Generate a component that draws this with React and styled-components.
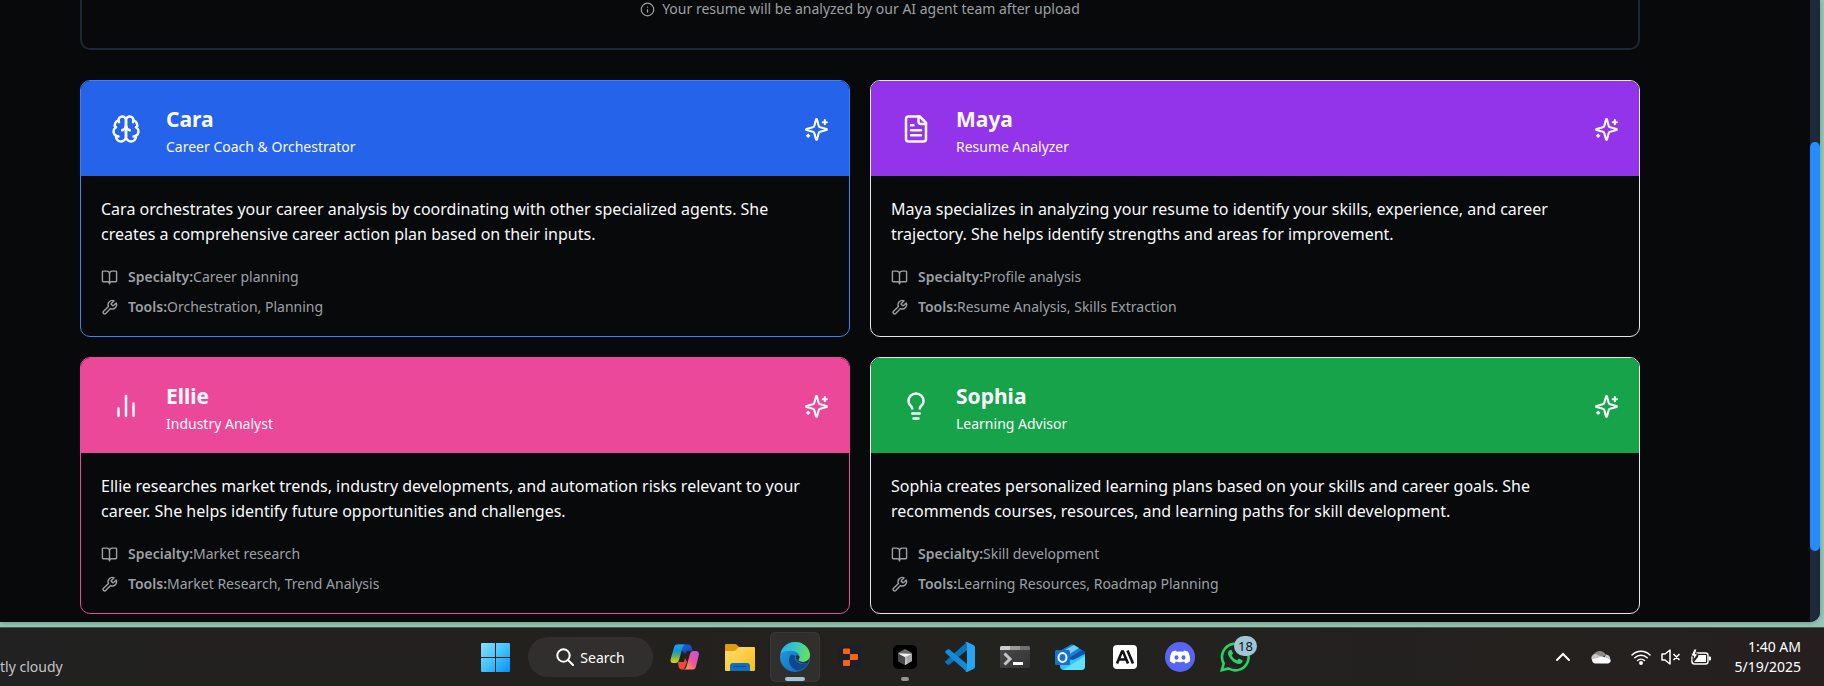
import React from 'react';
import styled, { createGlobalStyle } from 'styled-components';

const Global = createGlobalStyle`
  *, *::before, *::after { box-sizing: border-box; }
  html, body { margin: 0; }
  body { background: #95c8b5; font-family: "Noto Sans", "Open Sans", sans-serif; }
  h2, p, dl, dt, dd { margin: 0; }
  button { font: inherit; color: inherit; border: 0; padding: 0; background: none; cursor: pointer; }
  svg { display: block; flex: none; }
`;

const Desktop = styled.div`
  display: flex;
  flex-direction: column;
  min-height: 100vh;
  gap: 5px;
  background: #95c8b5;
`;

const Browser = styled.div`
  display: flex;
  flex: 1;
  margin-right: 4px;
  border-bottom-right-radius: 10px;
  overflow: hidden;
  background: #08090b;
  color: #f8fafc;
  box-shadow: 0 1px 5px rgba(0, 0, 0, 0.25);
`;

const Page = styled.main`
  flex: 1;
  padding: 0 170px 8px 80px;
`;

const ScrollTrack = styled.div`
  display: grid;
  grid-template-rows: 142fr 409fr 71fr;
  width: 10px;
  background: #1e293b;
`;

const ScrollThumb = styled.div`
  grid-row: 2;
  border-radius: 5px;
  background: #248cfc;
`;

const UploadPanel = styled.section`
  display: flex;
  justify-content: center;
  padding-bottom: 30px;
  margin-bottom: 30px;
  border: 2px solid #1e2735;
  border-top: 0;
  border-radius: 0 0 10px 10px;
`;

const Hint = styled.p`
  display: flex;
  align-items: center;
  gap: 7px;
  font-size: 14px;
  line-height: 18px;
  color: #9ca0a5;
`;

const Cards = styled.div`
  display: grid;
  grid-template-columns: 1fr 1fr;
  gap: 20px;
`;

const Card = styled.article`
  border: 1px solid ${(p) => p.$border};
  border-radius: 10px;
  overflow: hidden;
`;

const CardHeader = styled.header`
  display: flex;
  align-items: center;
  gap: 15px;
  padding: 20px 20px 19px;
  background: ${(p) => p.$fill};
`;

const Avatar = styled.div`
  padding: 10px;
`;

const Titles = styled.div`
  flex: 1;
  padding-top: 1px;
`;

const Name = styled.h2`
  font-size: 21px;
  line-height: 35px;
  font-weight: 700;
`;

const Role = styled.p`
  font-size: 14px;
  line-height: 20px;
`;

const CardBody = styled.div`
  display: flex;
  flex-direction: column;
  gap: 20px;
  padding: 21px 20px 19px;
`;

const Description = styled.p`
  padding-right: 20px;
  font-size: 16px;
  line-height: 25px;
`;

const Facts = styled.dl`
  display: flex;
  flex-direction: column;
  gap: 10px;
`;

const Fact = styled.div`
  display: flex;
  align-items: center;
  font-size: 14px;
  line-height: 20px;
  color: #9ca0a5;
  svg { margin-right: 10px; }
  dt { font-weight: 600; }
`;

const Taskbar = styled.footer`
  display: grid;
  grid-template-columns: 470px auto 1fr;
  align-items: center;
  height: 59px;
  border-top: 1px solid #4b5350;
  background: linear-gradient(90deg, #212121, #23211e 30%, #22221f 60%, #25201f);
  color: #fff;
`;

const Weather = styled.div`
  padding-top: 20px;
  font-size: 14px;
  line-height: 20px;
  color: #c4c4c4;
`;

const Apps = styled.nav`
  display: flex;
  align-items: center;
  gap: 5px;
`;

const AppButton = styled.button`
  position: relative;
  display: grid;
  place-items: center;
  width: 50px;
  height: 50px;
  border-radius: 6px;
  ${(p) => p.$active && 'background: #302f2d; box-shadow: inset 0 0 0 1px #393836;'}
`;

const Running = styled.span`
  position: absolute;
  bottom: 1px;
  width: ${(p) => (p.$active ? 20 : 8)}px;
  height: 4px;
  border-radius: 2px;
  background: ${(p) => (p.$active ? '#9fc5d8' : '#96938f')};
`;

const Badge = styled.span`
  position: absolute;
  top: 4px;
  right: 3px;
  min-width: 23px;
  border-radius: 10px;
  background: #a0c6d6;
  color: #101418;
  font-size: 13px;
  line-height: 20px;
  text-align: center;
`;

const SearchButton = styled.button`
  display: flex;
  align-items: center;
  justify-content: center;
  gap: 6px;
  width: 125px;
  height: 40px;
  margin: 0 2px 0 3px;
  border-radius: 20px;
  && { background: #302f2d; }
  font-size: 14px;
`;

const Tray = styled.div`
  display: flex;
  align-items: center;
  justify-content: flex-end;
  gap: 20px;
  padding-right: 23px;
`;

const TrayButton = styled.button`
  display: flex;
  align-items: center;
  gap: 10px;
`;

const Clock = styled.time`
  min-width: 70px;
  font-size: 14px;
  line-height: 20px;
  text-align: right;
`;

const ClockLine = styled.span`
  display: block;
`;

const Line = ({ size, children, width = 2 }) => (
  <svg width={size} height={size} viewBox="0 0 24 24" fill="none" stroke="currentColor" strokeWidth={width} strokeLinecap="round" strokeLinejoin="round" aria-hidden="true">
    {children}
  </svg>
);

const Brain = () => (
  <Line size={30}>
    <path d="M12 5a3 3 0 1 0-5.997.125 4 4 0 0 0-2.526 5.77 4 4 0 0 0 .556 6.588A4 4 0 1 0 12 18Z" />
    <path d="M12 5a3 3 0 1 1 5.997.125 4 4 0 0 1 2.526 5.77 4 4 0 0 1-.556 6.588A4 4 0 1 1 12 18Z" />
    <path d="M15 13a4.5 4.5 0 0 1-3-4 4.5 4.5 0 0 1-3 4" />
    <path d="M17.599 6.5a3 3 0 0 0 .399-1.375M6.003 5.125A3 3 0 0 0 6.401 6.5M3.477 10.896a4 4 0 0 1 .585-.396M19.938 10.5a4 4 0 0 1 .585.396M6 18a4 4 0 0 1-1.967-.516M19.967 17.484A4 4 0 0 1 18 18" />
  </Line>
);

const FileText = () => (
  <Line size={30}>
    <path d="M15 2H6a2 2 0 0 0-2 2v16a2 2 0 0 0 2 2h12a2 2 0 0 0 2-2V7Z" />
    <path d="M14 2v4a2 2 0 0 0 2 2h4M10 9H8M16 13H8M16 17H8" />
  </Line>
);

const Bars = () => (
  <Line size={30}>
    <path d="M18 20V10M12 20V4M6 20v-6" />
  </Line>
);

const Bulb = () => (
  <Line size={30}>
    <path d="M15 14c.2-1 .7-1.7 1.5-2.5 1-.9 1.5-2.2 1.5-3.5A6 6 0 0 0 6 8c0 1 .2 2.2 1.5 3.5.7.7 1.3 1.5 1.5 2.5M9 18h6M10 22h4" />
  </Line>
);

const Sparkles = () => (
  <Line size={25}>
    <path d="M9.937 15.5A2 2 0 0 0 8.5 14.063l-6.135-1.582a.5.5 0 0 1 0-.962L8.5 9.936A2 2 0 0 0 9.937 8.5l1.582-6.135a.5.5 0 0 1 .963 0L14.063 8.5A2 2 0 0 0 15.5 9.937l6.135 1.581a.5.5 0 0 1 0 .964L15.5 14.063a2 2 0 0 0-1.437 1.437l-1.582 6.135a.5.5 0 0 1-.963 0z" />
    <path d="M20 3v4M22 5h-4M4 17v2M5 18H3" />
  </Line>
);

const Book = () => (
  <Line size={17}>
    <path d="M12 7v14M3 18a1 1 0 0 1-1-1V4a1 1 0 0 1 1-1h5a4 4 0 0 1 4 4 4 4 0 0 1 4-4h5a1 1 0 0 1 1 1v13a1 1 0 0 1-1 1h-6a3 3 0 0 0-3 3 3 3 0 0 0-3-3z" />
  </Line>
);

const Wrench = () => (
  <Line size={17}>
    <path d="M14.7 6.3a1 1 0 0 0 0 1.4l1.6 1.6a1 1 0 0 0 1.4 0l3.77-3.77a6 6 0 0 1-7.94 7.94l-6.91 6.91a2.12 2.12 0 0 1-3-3l6.91-6.91a6 6 0 0 1 7.94-7.94l-3.76 3.76z" />
  </Line>
);

const Info = () => (
  <Line size={15}>
    <circle cx="12" cy="12" r="10" />
    <path d="M12 16v-4M12 8h.01" />
  </Line>
);

const AppSvg = ({ children }) => (
  <svg width="30" height="30" viewBox="0 0 30 30" aria-hidden="true">{children}</svg>
);

const Windows = () => (
  <AppSvg>
    <defs>
      <linearGradient id="win" x1="0" y1="0" x2="30" y2="30" gradientUnits="userSpaceOnUse">
        <stop stopColor="#8ce0fd" /><stop offset=".5" stopColor="#45c4fb" /><stop offset="1" stopColor="#0590f8" />
      </linearGradient>
    </defs>
    <path fill="url(#win)" d="M1 2q0-1 1-1h13v14H1zM16 1h13q1 0 1 1v13H16zM1 16h14v14H2q-1 0-1-1zM16 16h14v13q0 1-1 1H16z" />
  </AppSvg>
);

const Copilot = () => (
  <AppSvg>
    <defs>
      <linearGradient id="copA" x1="0" y1="0" x2="0" y2="1"><stop stopColor="#1aa3f0" /><stop offset=".35" stopColor="#1595d8" /><stop offset=".65" stopColor="#5cb85a" /><stop offset="1" stopColor="#f7c90c" /></linearGradient>
      <linearGradient id="copB" x1="1" y1="0" x2="0" y2="1"><stop stopColor="#b256ee" /><stop offset=".5" stopColor="#ee5497" /><stop offset="1" stopColor="#ffa65a" /></linearGradient>
      <linearGradient id="copC" x1="0" y1="0" x2="1" y2="1"><stop stopColor="#1877e8" /><stop offset="1" stopColor="#1535a8" /></linearGradient>
    </defs>
    <path fill="url(#copC)" d="M7 2.500h11c2 0 3 1 3.500 2.500l1.200 4h-4c-2 0-3 1-3.600 3z" />
    <path fill="#f0483c" d="M8 20h6l1-4 2 4-3 7.500h-2c-2 0-3-1-3.500-3z" />
    <path fill="url(#copA)" d="M7 2.500h8c-1.500.3-2 1.500-2.500 3L9 18c-.6 2-1.500 3-3.500 3H3c-2 0-3-2-2.300-4L4 5.500c.5-2 1.500-3 3-3z" />
    <path fill="url(#copB)" d="M23 27.500h-9c1.500-.3 2-1.500 2.500-3L20 12c.6-2 1.500-3 3.500-3H26c2 0 3.400 2 2.800 4L26 24.500c-.5 2-1.500 3-3 3z" />
  </AppSvg>
);

const Explorer = () => (
  <AppSvg>
    <defs><linearGradient id="fold" x1="0" y1="0" x2="1" y2="1"><stop stopColor="#ffde72" /><stop offset="1" stopColor="#fbbc14" /></linearGradient></defs>
    <path fill="#e09b08" d="M0 3q0-1 1-1h9q1 0 2 1l3 3v5H0z" />
    <path fill="url(#fold)" d="M0 10q0-1 1-1h8q1 0 2-1l3-3h15q1 0 1 1v22q0 1-1 1H1q-1 0-1-1z" />
    <path fill="#0d6fc4" d="M5 29v-5q0-3 3-3h14q3 0 3 3v5z" />
    <path stroke="#07447f" strokeLinecap="round" d="M9 24.500h12" />
  </AppSvg>
);

const Edge = () => (
  <AppSvg>
    <defs>
      <linearGradient id="edA" x1="0" y1=".3" x2="1" y2=".5"><stop stopColor="#2ab2e8" /><stop offset=".45" stopColor="#35c6c8" /><stop offset="1" stopColor="#66e258" /></linearGradient>
      <linearGradient id="edB" x1="0" y1="0" x2="1" y2="1"><stop stopColor="#249cdf" /><stop offset="1" stopColor="#0a66bd" /></linearGradient>
    </defs>
    <circle cx="15" cy="15" r="15" fill="url(#edB)" />
    <path fill="#0f488f" d="M11 12.500C7 17 9 26 17 28.500c5-.4 9-3.500 11-7.500-3 1.500-7 1.500-10-.5-3-2-4-4-2.600-7z" />
    <path fill="url(#edA)" d="M.5 12C1.500 5 8 0 15 0c9 0 15 6.500 15 13 0 4-3 7-7 7-3 0-5-1.300-4.600-2.300.4-.7 1.100-1.200 1.100-2.900 0-3-3.500-6-8.500-6C6 8.800 2 10.500.5 12z" />
    <path fill="#302f2d" d="M30 14c-.4 3.600-3.500 6-7 6-3 0-5-1.300-4.600-2.300.4-.7 1.100-1.200 1.100-2.900-.6-1-2-1.800-3-1.500-1.800 2 .2 6 4 7.500 3 1 5.500.7 7.500 0z" />
  </AppSvg>
);

const Replit = () => (
  <AppSvg>
    <rect x="4" y="4" width="22" height="22" rx="2" fill="#1b202c" />
    <path fill="#f9640a" d="M9 6.500h5q1 0 1 1V12H9q-1 0-1-1V7.500q0-1 1-1zM15 12h7q1 0 1 1v4q0 1-1 1h-7zM9 18h6v5q0 1-1 1H9q-1 0-1-1v-4q0-1 1-1z" />
  </AppSvg>
);

const Cursor = () => (
  <AppSvg>
    <defs><linearGradient id="cur" x1="0" y1="0" x2="1" y2="1"><stop stopColor="#8c8c8c" /><stop offset="1" stopColor="#e4e4e4" /></linearGradient></defs>
    <rect x="3" y="3" width="24" height="24" rx="5" fill="#000" />
    <path fill="#707070" d="M15 7l7 4v8l-7 4-7-4v-8z" />
    <path fill="#4a4a4a" d="M8 11l7 4v8l-7-4z" />
    <path fill="url(#cur)" d="M8 11l14 1-5 4v6l-2 1v-8z" />
    <path fill="#a8a8a8" d="M22 12v7l-5 3v-6z" />
    <path fill="#f2f2f2" d="M8 11.500l13.500.5-6.500 3z" />
  </AppSvg>
);

const VSCode = () => (
  <AppSvg>
    <path fill="#0a75bb" d="M22 0v8L4.500 22.500q-1 .8-2 0L.6 21q-1-1 0-2z" />
    <path fill="#148bd6" d="M22 30v-8L4.500 7.500q-1-.8-2 0L.6 9q-1 1 0 2z" />
    <path fill="#27a5f0" d="M22 0l6.500 3Q30 3.800 30 5v20q0 1.200-1.500 2L22 30q-1 0-1.800-1 1.800.5 1.800-1.500v-25Q22 .6 20.200 1 21 0 22 0z" />
  </AppSvg>
);

const Terminal = () => (
  <AppSvg>
    <defs><linearGradient id="term" x1="0" y1="0" x2="1" y2="1"><stop stopColor="#4a4a4a" /><stop offset="1" stopColor="#333" /></linearGradient></defs>
    <rect y="4" width="30" height="22" rx="1.500" fill="url(#term)" />
    <path fill="#ccc" d="M1.500 4H10v4H0V5.500Q0 4 1.500 4z" /><path fill="#999" d="M10 4h10v4H10z" /><path fill="#707070" d="M20 4h8.500Q30 4 30 5.500V8H20z" />
    <path fill="none" stroke="#c4c4c4" strokeWidth="3" d="M4.500 11.500L10 17l-5.500 5.500" />
    <path fill="#fff" d="M13 20h10v3H13z" />
  </AppSvg>
);

const Outlook = () => (
  <AppSvg>
    <path fill="#1a7fd6" d="M5 9L16 2.500q1-.6 2 0L30 10v6H5z" />
    <path fill="#70cbf5" d="M10 8l9-5 5 3-14 9z" />
    <path fill="#0b54ab" d="M14 16L27 8l3 2v4L18 20z" />
    <path fill="#35c3f3" d="M5 16l13 2 12-6v12q0 4-4 4H9q-4 0-4-4z" />
    <path fill="#62e0fa" d="M8 28l22-14v10q0 4-4 4z" />
    <rect y="8" width="15" height="15" rx="1.500" fill="#1573cd" />
    <ellipse cx="7.500" cy="15.500" rx="4" ry="4.400" fill="none" stroke="#fff" strokeWidth="2" />
  </AppSvg>
);

const Anthropic = () => (
  <AppSvg>
    <rect x="3" y="3" width="24" height="24" rx="4" fill="#fff" />
    <path fill="none" stroke="#111" strokeWidth="2.600" d="M7 21.500L12 9.500h1L18 21.500M9 17.500h7M17.500 8.500L23 21.500" />
  </AppSvg>
);

const Discord = () => (
  <AppSvg>
    <circle cx="15" cy="15" r="15" fill="#5865f2" />
    <path fill="#fff" d="M11 8.500c-1.500.2-3 .7-4 1.300-1.600 2.800-2.400 6-2 9.400 1.500 1.200 3 1.900 4.700 2.300l1-1.900c2.800.8 5.800.8 8.600 0l1 1.900c1.700-.4 3.200-1.100 4.700-2.300.4-3.400-.4-6.600-2-9.400-1-.6-2.500-1.100-4-1.300l-.7 1.300a15 15 0 0 0-6.600 0z" />
    <ellipse cx="11.500" cy="15.500" rx="2" ry="2.200" fill="#5865f2" /><ellipse cx="18.500" cy="15.500" rx="2" ry="2.200" fill="#5865f2" />
  </AppSvg>
);

const WhatsApp = () => (
  <AppSvg>
    <path fill="none" stroke="#25d366" strokeWidth="2.600" d="M1.800 28.200l1.900-6.700A13.300 13.300 0 1 1 8.600 26.500z" />
    <path fill="#25d366" d="M10 8c-2 1-2.600 3-1.500 5.500 2 4.500 5.500 7.500 10 8.500 2 .3 4-.8 4.200-3.500l-3.800-2-1.800 2c-2.500-1-4.300-2.700-5.500-5.200l1.500-1.800L11.500 8z" />
  </AppSvg>
);

const SearchGlyph = () => (
  <svg width="18" height="18" viewBox="0 0 18 18" fill="none" stroke="#fff" strokeWidth="2" strokeLinecap="round" aria-hidden="true">
    <circle cx="7.500" cy="7.500" r="6.200" /><path d="M12.300 12.300L17 17" />
  </svg>
);

const Chevron = () => (
  <svg width="16" height="10" viewBox="0 0 16 10" fill="none" stroke="#fff" strokeWidth="2" strokeLinecap="round" aria-hidden="true"><path d="M2 8l6-6 6 6" /></svg>
);

const Cloud = () => (
  <svg width="20" height="14" viewBox="0 0 20 14" aria-hidden="true">
    <path fill="#8d8b89" d="M4 11A4 4 0 0 1 3 4a7 7 0 0 1 12 1l-5 3z" />
    <path fill="#c9c8c7" d="M1 10a4 4 0 0 1 4-6l8 4 2-3.500a4 4 0 0 1 4 5L8 13z" />
    <path fill="#fff" d="M4 13.500a4 4 0 0 1-3-4L11 6.500l8.500 3a3 3 0 0 1-2.500 4z" />
  </svg>
);

const Wifi = () => (
  <svg width="20" height="16" viewBox="0 0 20 16" fill="none" stroke="#fff" strokeWidth="1.500" strokeLinecap="round" aria-hidden="true">
    <path d="M1 6a12.700 12.700 0 0 1 18 0M3.800 8.800a8.800 8.800 0 0 1 12.400 0M6.600 11.500a4.900 4.900 0 0 1 6.800 0" /><circle cx="10" cy="14" r="1.200" fill="#fff" />
  </svg>
);

const Muted = () => (
  <svg width="20" height="16" viewBox="0 0 20 16" fill="none" stroke="#fff" strokeWidth="1.500" strokeLinejoin="round" aria-hidden="true">
    <path d="M1 5h3l5-4v14l-5-4H1zM12.500 5l6 6M18.500 5l-6 6" />
  </svg>
);

const Battery = () => (
  <svg width="20" height="18" viewBox="0 0 20 18" aria-hidden="true">
    <rect x="1" y="5" width="16" height="11" rx="2.500" fill="none" stroke="#fff" strokeWidth="1.500" />
    <path fill="#fff" d="M7.500 7H15v7H3l4-5zM18 8.500h1q1 0 1 1v2q0 1-1 1h-1z" />
    <path fill="#fff" stroke="#25211f" d="M3 1L0 8h2.500L2 12.500 7 6H4.500L6 1z" />
  </svg>
);

const agents = [
  { name: 'Cara', role: 'Career Coach & Orchestrator', Icon: Brain, fill: '#2563eb', border: '#3b82f6',
    text: 'Cara orchestrates your career analysis by coordinating with other specialized agents. She creates a comprehensive career action plan based on their inputs.',
    specialty: 'Career planning', tools: 'Orchestration, Planning' },
  { name: 'Maya', role: 'Resume Analyzer', Icon: FileText, fill: '#9333ea', border: '#e5e7eb',
    text: 'Maya specializes in analyzing your resume to identify your skills, experience, and career trajectory. She helps identify strengths and areas for improvement.',
    specialty: 'Profile analysis', tools: 'Resume Analysis, Skills Extraction' },
  { name: 'Ellie', role: 'Industry Analyst', Icon: Bars, fill: '#ec4899', border: '#ec4899',
    text: 'Ellie researches market trends, industry developments, and automation risks relevant to your career. She helps identify future opportunities and challenges.',
    specialty: 'Market research', tools: 'Market Research, Trend Analysis' },
  { name: 'Sophia', role: 'Learning Advisor', Icon: Bulb, fill: '#16a34a', border: '#e5e7eb',
    text: 'Sophia creates personalized learning plans based on your skills and career goals. She recommends courses, resources, and learning paths for skill development.',
    specialty: 'Skill development', tools: 'Learning Resources, Roadmap Planning' },
];

const apps = [
  { label: 'Copilot', Icon: Copilot },
  { label: 'File Explorer', Icon: Explorer },
  { label: 'Edge', Icon: Edge, running: true, active: true },
  { label: 'Replit', Icon: Replit },
  { label: 'Cursor', Icon: Cursor, running: true },
  { label: 'Visual Studio Code', Icon: VSCode },
  { label: 'Terminal', Icon: Terminal },
  { label: 'Outlook', Icon: Outlook },
  { label: 'Claude', Icon: Anthropic },
  { label: 'Discord', Icon: Discord },
  { label: 'WhatsApp', Icon: WhatsApp, badge: 18 },
];

const AgentCard = ({ name, role, Icon, fill, border, text, specialty, tools }) => (
  <Card $border={border}>
    <CardHeader $fill={fill}>
      <Avatar><Icon /></Avatar>
      <Titles>
        <Name>{name}</Name>
        <Role>{role}</Role>
      </Titles>
      <Sparkles />
    </CardHeader>
    <CardBody>
      <Description>{text}</Description>
      <Facts>
        <Fact><Book /><dt>Specialty:</dt><dd>{specialty}</dd></Fact>
        <Fact><Wrench /><dt>Tools:</dt><dd>{tools}</dd></Fact>
      </Facts>
    </CardBody>
  </Card>
);

export default function App() {
  return (
    <Desktop>
      <Global />
      <Browser>
        <Page>
          <UploadPanel>
            <Hint><Info />Your resume will be analyzed by our AI agent team after upload</Hint>
          </UploadPanel>
          <Cards>
            {agents.map((a) => <AgentCard key={a.name} {...a} />)}
          </Cards>
        </Page>
        <ScrollTrack><ScrollThumb /></ScrollTrack>
      </Browser>
      <Taskbar>
        <Weather>tly cloudy</Weather>
        <Apps>
          <AppButton aria-label="Start"><Windows /></AppButton>
          <SearchButton><SearchGlyph />Search</SearchButton>
          {apps.map(({ label, Icon, running, active, badge }) => (
            <AppButton key={label} aria-label={label} $active={active}>
              <Icon />
              {running && <Running $active={active} />}
              {badge && <Badge>{badge}</Badge>}
            </AppButton>
          ))}
        </Apps>
        <Tray>
          <TrayButton aria-label="Show hidden icons"><Chevron /></TrayButton>
          <TrayButton aria-label="OneDrive"><Cloud /></TrayButton>
          <TrayButton aria-label="Network, sound and battery"><Wifi /><Muted /><Battery /></TrayButton>
          <Clock><ClockLine>1:40 AM</ClockLine><ClockLine>5/19/2025</ClockLine></Clock>
        </Tray>
      </Taskbar>
    </Desktop>
  );
}
